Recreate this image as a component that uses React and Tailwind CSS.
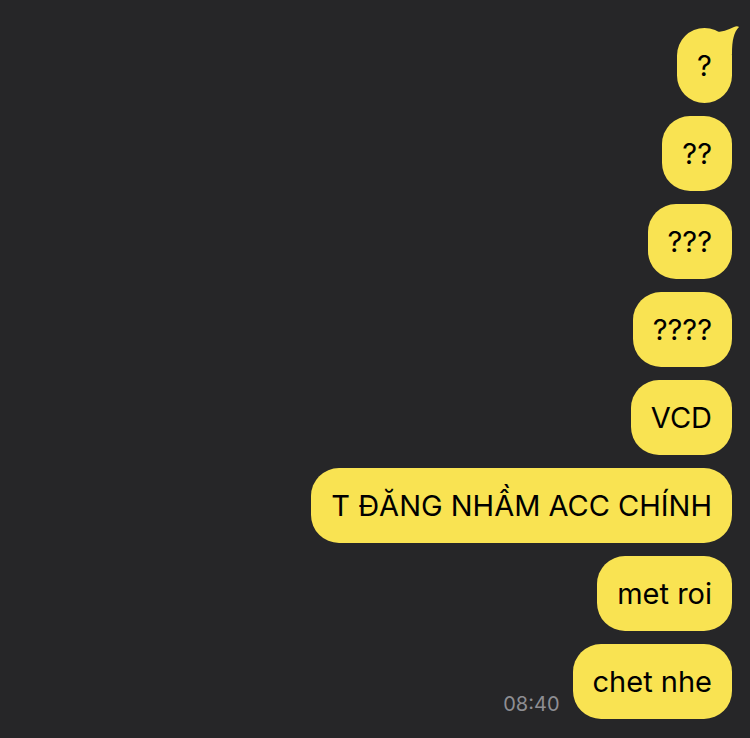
const messages = ["?", "??", "???", "????", "VCD", "T ĐĂNG NHẦM ACC CHÍNH", "met roi", "chet nhe"];

function Bubble({ text, tail, time }) {
  return (
    <div className="flex items-end justify-end gap-[13px]">
      {time && (
        <span className="mb-[3px] text-[20px] leading-[24px] text-[#8e8e93]">{time}</span>
      )}
      <div className="relative">
        {tail && (
          <svg
            className="absolute right-[-8px] top-[-2px]"
            width="26"
            height="28"
            viewBox="0 0 26 28"
          >
            <path d="M0 6 C8 6 14 4 20 1 C22 0 24 0 25 1 C20 6 18 14 18 28 L0 28 Z" fill="#f9e352" />
          </svg>
        )}
        <div className="relative h-[75px] min-w-[55px] rounded-[28px] bg-[#f9e352] px-[20px] flex items-center justify-center text-[29px] text-black whitespace-nowrap">
          {text}
        </div>
      </div>
    </div>
  );
}

export default function App() {
  return (
    <div
      className="min-h-[738px] w-[750px] bg-[#262628] pt-[28px] pr-[18px] flex flex-col gap-[13px]"
      style={{ fontFamily: "Inter, 'Liberation Sans', sans-serif" }}
    >
      {messages.map((m, i) => (
        <Bubble
          key={i}
          text={m}
          tail={i === 0}
          time={i === messages.length - 1 ? "08:40" : null}
        />
      ))}
    </div>
  );
}
